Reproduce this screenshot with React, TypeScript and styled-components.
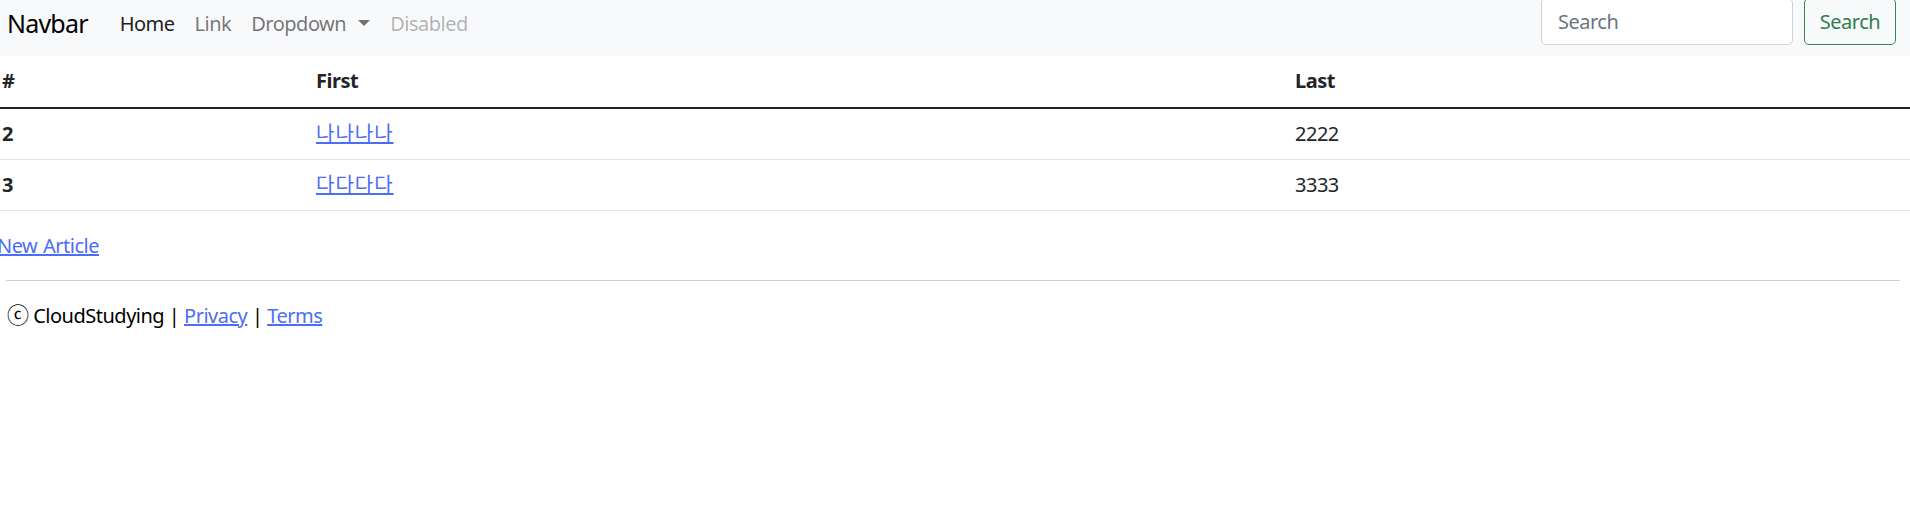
import React from "react";
import styled, { createGlobalStyle } from "styled-components";

const Global = createGlobalStyle`
  html, body { margin: 0; padding: 0; background: #fff; }
  body {
    font-family: "Noto Sans", "Noto Sans CJK KR", sans-serif;
    font-size: 20px;
    line-height: 30px;
    letter-spacing: -0.5px;
    color: #212529;
    overflow: hidden;
  }
  * { box-sizing: border-box; }
`;

const Nav = styled.nav`
  height: 56px;
  background: #f8f9fa;
  display: flex;
  align-items: flex-start;
  padding: 0 14px 0 7px;
`;

const Brand = styled.a`
  font-size: 25px;
  line-height: 38px;
  letter-spacing: -0.8px;
  padding-top: 4px;
  margin-right: 22px;
  color: #000;
  text-decoration: none;
`;

const Links = styled.ul`
  display: flex;
  list-style: none;
  margin: 0;
  padding: 9px 0 0;
  flex: 1;
`;

const NavLink = styled.a<{ $tone: "active" | "normal" | "disabled" }>`
  display: flex;
  align-items: center;
  padding: 0 10px;
  line-height: 30px;
  text-decoration: none;
  color: ${(p) =>
    p.$tone === "active" ? "rgba(0,0,0,0.9)" : p.$tone === "disabled" ? "rgba(0,0,0,0.3)" : "rgba(0,0,0,0.55)"};
`;

const Caret = styled.span`
  display: inline-block;
  margin-left: 12px;
  width: 0;
  height: 0;
  border-top: 6px solid currentColor;
  border-left: 6px solid transparent;
  border-right: 6px solid transparent;
  transform: translateY(-1px);
`;

const Form = styled.form`
  display: flex;
  gap: 11px;
  margin-top: -2px;
`;

const Input = styled.input`
  width: 252px;
  height: 47px;
  padding: 0 16px;
  font: inherit;
  letter-spacing: inherit;
  color: #212529;
  border: 1px solid #ced4da;
  border-radius: 5px;
  background: #fff;
  &::placeholder { color: #6c757d; }
`;

const Button = styled.button`
  width: 92px;
  height: 47px;
  font: inherit;
  letter-spacing: inherit;
  color: #2f7d4c;
  background: transparent;
  border: 1px solid #3a8556;
  border-radius: 5px;
  padding: 0;
`;

const Table = styled.table`
  width: 100%;
  border-collapse: collapse;
  margin-bottom: 20px;
`;

const Th = styled.th<{ $w?: string }>`
  text-align: left;
  font-weight: 700;
  padding: 10px 2px 11px;
  height: 50px;
  width: ${(p) => p.$w || "auto"};
  border-bottom: 2px solid #212529;
`;

const Td = styled.td<{ $bold?: boolean }>`
  padding: 10px 2px;
  height: 51px;
  font-weight: ${(p) => (p.$bold ? 700 : 400)};
  border-bottom: 1px solid #dee2e6;
`;

const Link = styled.a<{ $wide?: boolean }>`
  color: #4c6ef5;
  text-decoration: underline;
  letter-spacing: ${(p) => (p.$wide ? "1px" : "inherit")};
`;

const Para = styled.p`
  margin: 0 0 19px -3px;
  word-spacing: 1px;
`;

const Footer = styled.footer`
  padding: 0 10px 0 6px;
`;

const Rule = styled.hr`
  margin: 0 0 20px;
  border: 0;
  border-top: 1px solid #cfcfcf;
`;

const FootText = styled.div`
  padding-left: 1px;
  height: 30px;
  color: #000;
`;

const Copy = styled.span`
  font-size: 22px;
  line-height: 1;
`;

export default function App() {
  return (
    <>
      <Global />
      <Nav>
        <Brand href="#">Navbar</Brand>
        <Links>
          <li><NavLink $tone="active" href="#">Home</NavLink></li>
          <li><NavLink $tone="normal" href="#">Link</NavLink></li>
          <li><NavLink $tone="normal" href="#">Dropdown<Caret /></NavLink></li>
          <li><NavLink $tone="disabled" href="#">Disabled</NavLink></li>
        </Links>
        <Form onSubmit={(e) => e.preventDefault()}>
          <Input placeholder="Search" />
          <Button type="submit">Search</Button>
        </Form>
      </Nav>
      <Table>
        <thead>
          <tr>
            <Th $w="314px">#</Th>
            <Th $w="979px">First</Th>
            <Th>Last</Th>
          </tr>
        </thead>
        <tbody>
          <tr>
            <Td $bold>2</Td>
            <Td><Link $wide href="#">나나나나</Link></Td>
            <Td>2222</Td>
          </tr>
          <tr>
            <Td $bold>3</Td>
            <Td><Link $wide href="#">다다다다</Link></Td>
            <Td>3333</Td>
          </tr>
        </tbody>
      </Table>
      <Para><Link href="#">New Article</Link></Para>
      <Footer>
        <Rule />
        <FootText><Copy>ⓒ</Copy> CloudStudying | <Link href="#">Privacy</Link> | <Link href="#">Terms</Link></FootText>
      </Footer>
    </>
  );
}
